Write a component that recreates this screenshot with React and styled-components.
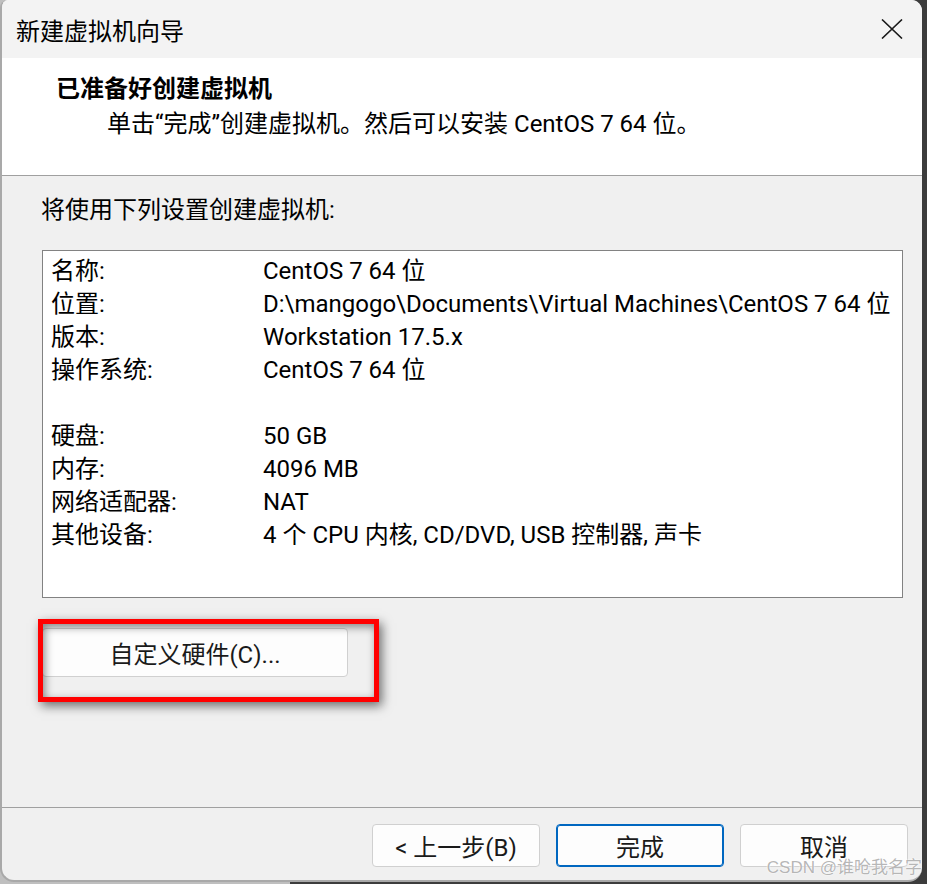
import React from 'react';
import styled, { createGlobalStyle } from 'styled-components';

const GlobalStyle = createGlobalStyle`
  html, body {
    margin: 0;
    padding: 0;
  }
  body {
    font-family: Roboto, "Noto Sans CJK SC", sans-serif;
    color: #000;
  }
`;

const Page = styled.div`
  width: 927px;
  height: 884px;
  background: linear-gradient(90deg, #bfbfbf 0 290px, #3c3c3c 290px);
  overflow: hidden;
`;

const Window = styled.div`
  position: relative;
  width: 922px;
  height: 882px;
  box-sizing: border-box;
  display: flex;
  flex-direction: column;
  background: #f0f0f0;
  border-left: 2px solid #a9a9a9;
  border-bottom: 2px solid #a9a9a9;
  border-radius: 8px 11px 14px 14px;
  overflow: hidden;
`;

const TitleBar = styled.div`
  height: 58px;
  flex-shrink: 0;
  display: flex;
  align-items: center;
  justify-content: space-between;
  padding: 0 19px 0 14px;
  background: #f3f3f3;
  font-size: 24px;
`;

const Header = styled.div`
  height: 117px;
  flex-shrink: 0;
  box-sizing: content-box;
  background: #fff;
  border-bottom: 1px solid #a0a0a0;
  padding: 0 0 0 54px;
`;

const HeaderTitle = styled.div`
  margin-top: 15px;
  font-size: 24px;
  font-weight: 700;
  line-height: 32px;
`;

const HeaderText = styled.div`
  margin-top: 3px;
  padding-left: 51px;
  font-size: 24px;
  line-height: 32px;
`;

const Body = styled.div`
  flex: 1;
  padding: 18px 0 0 40px;
  font-size: 24px;
`;

const Intro = styled.div`
  line-height: 32px;
  margin-left: -1px;
`;

const SummaryBox = styled.div`
  margin-top: 24px;
  width: 861px;
  height: 348px;
  box-sizing: border-box;
  border: 1px solid #828282;
  background: #fff;
  padding: 4px 0 0 8px;
`;

const Row = styled.div`
  display: grid;
  grid-template-columns: 212px 1fr;
  height: 33px;
  line-height: 33px;
  white-space: nowrap;
`;

const ButtonSpot = styled.div`
  position: relative;
  margin-top: 30px;
  width: 306px;
`;

const Button = styled.button`
  width: ${p => p.$w || 168}px;
  height: ${p => p.$h || 43}px;
  box-sizing: border-box;
  background: #fdfdfd;
  border: 1px solid ${p => (p.$primary ? '#0067c0' : '#d0d0d0')};
  box-shadow: ${p => (p.$primary ? 'inset 0 0 0 1px #0067c0' : 'none')};
  border-radius: 4px;
  font-family: inherit;
  font-size: 24px;
  color: #1a1a1a;
  padding: 0;
`;

const RedMark = styled.div`
  position: absolute;
  left: -4px;
  top: -9px;
  width: 341px;
  height: 83px;
  box-sizing: border-box;
  border: 5px solid #ff0000;
  box-shadow: 3px 4px 10px rgba(0, 0, 0, 0.55), inset 2px 3px 9px rgba(0, 0, 0, 0.45);
  pointer-events: none;
`;

const Footer = styled.div`
  flex-shrink: 0;
  height: 73px;
  border-top: 1px solid #a0a0a0;
  display: flex;
  justify-content: flex-end;
  align-items: flex-start;
  gap: 16px;
  padding: 16px 14px 0 0;
  box-sizing: border-box;
`;

const Watermark = styled.div`
  position: absolute;
  right: 0;
  bottom: 2px;
  font-family: "Liberation Sans", "Noto Sans CJK SC", sans-serif;
  font-size: 17px;
  color: rgba(120, 120, 120, 0.55);
  text-shadow: 0 0 2px #fff, 0 0 1px #fff;
  white-space: nowrap;
`;

const CloseIcon = () => (
  <svg width="22" height="20" viewBox="0 0 22 20">
    <path d="M1 0.5 L21 19.5 M21 0.5 L1 19.5" stroke="#1a1a1a" strokeWidth="1.6" fill="none" />
  </svg>
);

const rows = [
  ['名称:', 'CentOS 7 64 位'],
  ['位置:', 'D:\\mangogo\\Documents\\Virtual Machines\\CentOS 7 64 位'],
  ['版本:', 'Workstation 17.5.x'],
  ['操作系统:', 'CentOS 7 64 位'],
  ['', ''],
  ['硬盘:', '50 GB'],
  ['内存:', '4096 MB'],
  ['网络适配器:', 'NAT'],
  ['其他设备:', '4 个 CPU 内核, CD/DVD, USB 控制器, 声卡'],
];

export default function App() {
  return (
    <>
      <GlobalStyle />
      <Page>
        <Window>
          <TitleBar>
            <span>新建虚拟机向导</span>
            <CloseIcon />
          </TitleBar>
          <Header>
            <HeaderTitle>已准备好创建虚拟机</HeaderTitle>
            <HeaderText>单击“完成”创建虚拟机。然后可以安装 CentOS 7 64 位。</HeaderText>
          </Header>
          <Body>
            <Intro>将使用下列设置创建虚拟机:</Intro>
            <SummaryBox>
              {rows.map(([k, v], i) => (
                <Row key={i}>
                  <span>{k}</span>
                  <span>{v}</span>
                </Row>
              ))}
            </SummaryBox>
            <ButtonSpot>
              <Button $w={306} $h={49}>自定义硬件(C)...</Button>
              <RedMark />
            </ButtonSpot>
          </Body>
          <Footer>
            <Button>&lt; 上一步(B)</Button>
            <Button $primary>完成</Button>
            <Button>取消</Button>
          </Footer>
          <Watermark>CSDN @谁呛我名字</Watermark>
        </Window>
      </Page>
    </>
  );
}
